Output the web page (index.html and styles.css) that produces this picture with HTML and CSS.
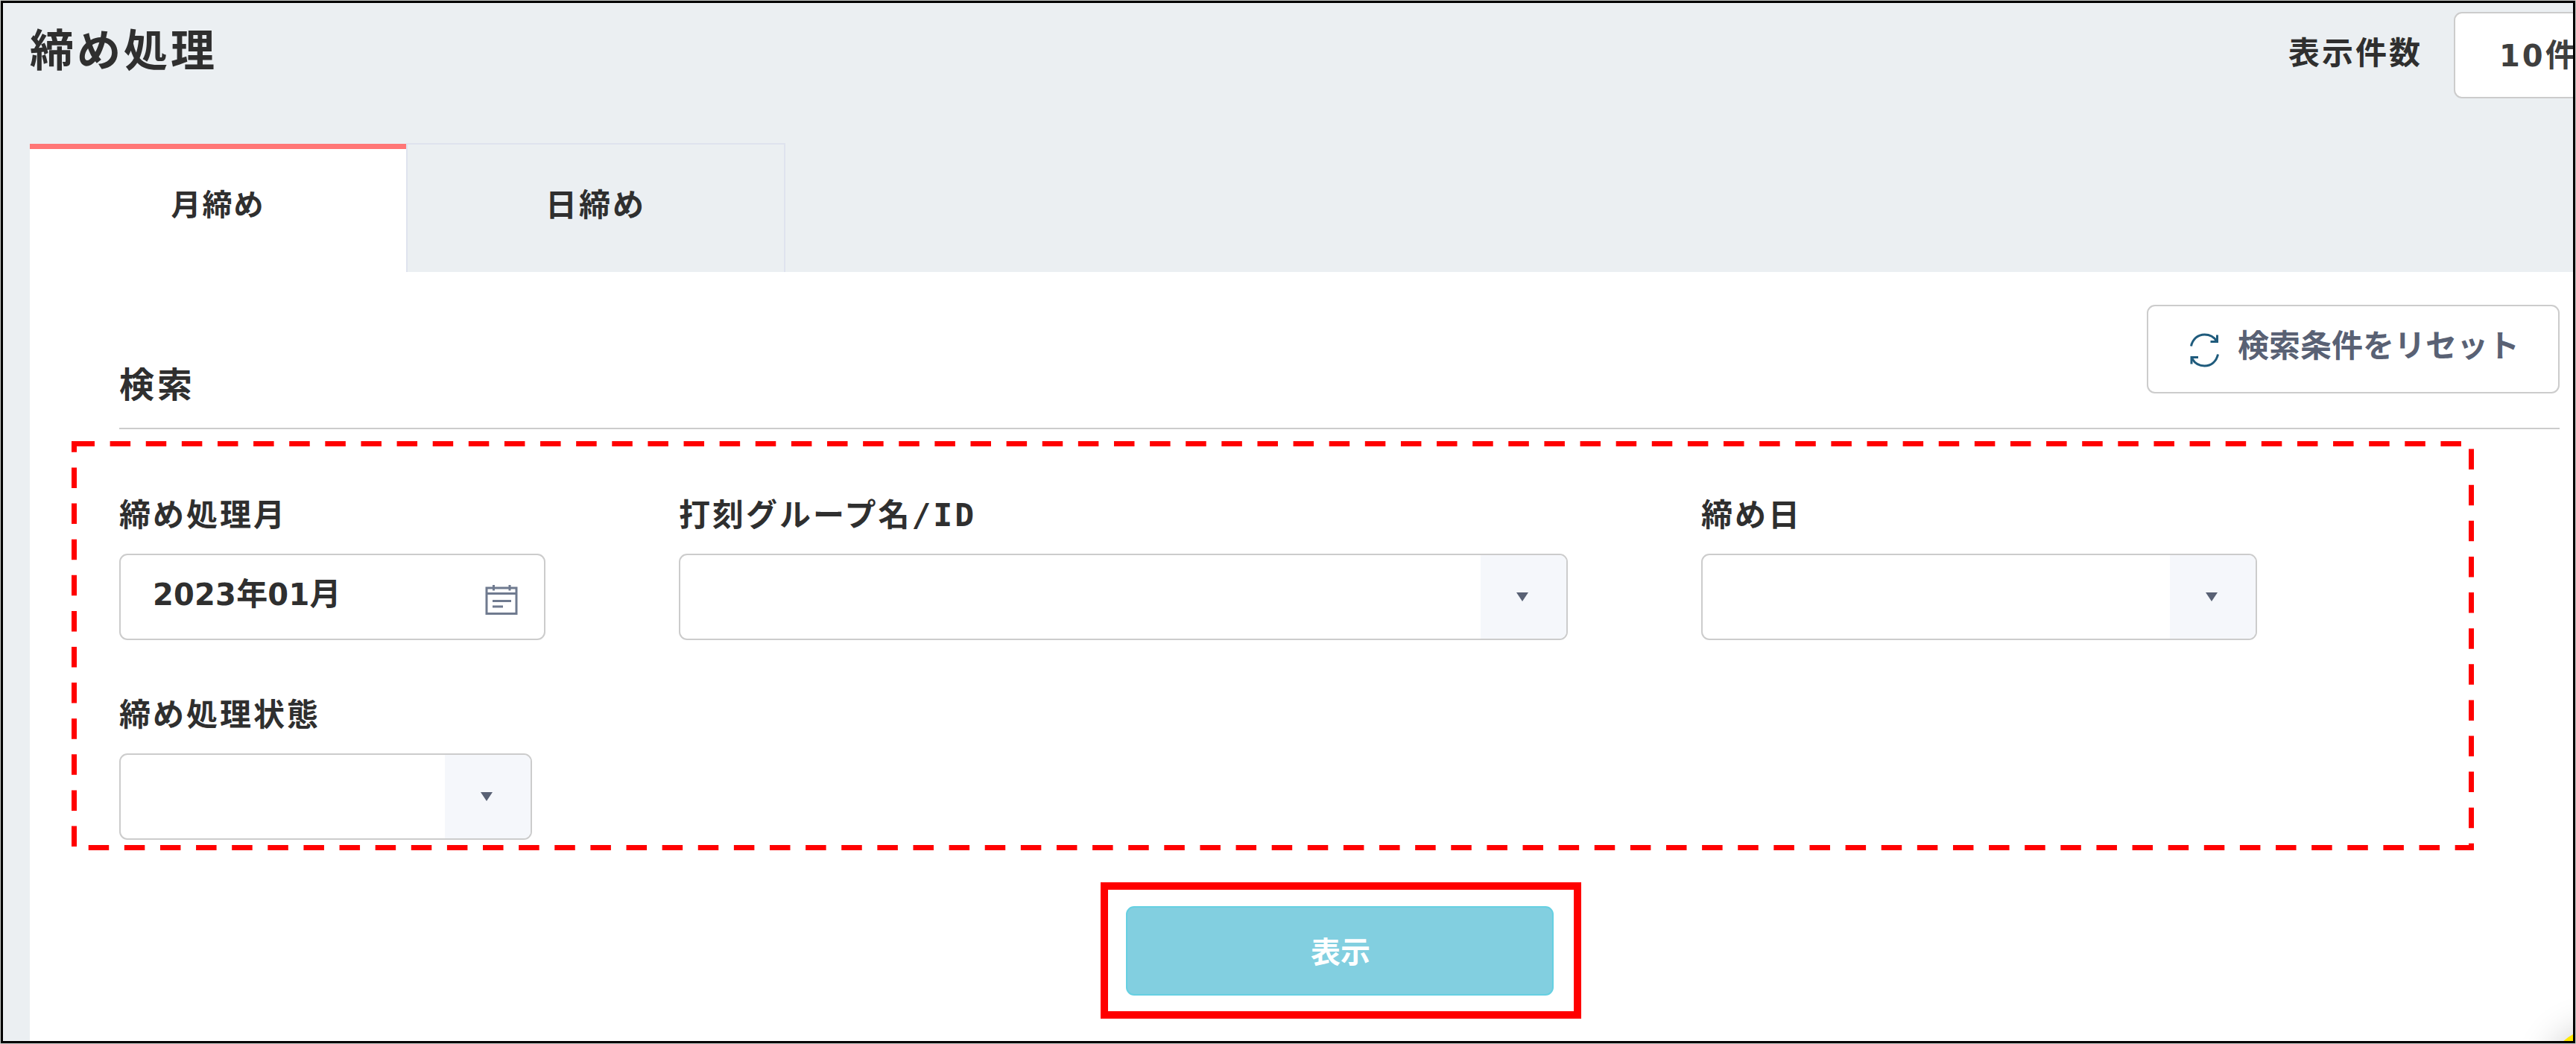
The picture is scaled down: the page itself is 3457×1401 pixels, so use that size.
FILE: index.html
```html
<!DOCTYPE html>
<html lang="ja">

<head>
    <meta charset="utf-8">
    <title>締め処理</title>
    <link rel="stylesheet" href="styles.css">
</head>

<body>
    <div class="page">
        <header class="page-header">
            <h1>締め処理</h1>
            <div class="page-size">
                <span class="page-size-label">表示件数</span>
                <div class="page-size-select"><span class="num">10</span>件</div>
            </div>
        </header>

        <nav class="tabs">
            <a class="tab active">月締め</a>
            <a class="tab">日締め</a>
        </nav>

        <main class="panel">
            <div class="search-header">
                <h2>検索</h2>
                <button class="reset" type="button">
                    <svg class="icon-reset" viewBox="0 0 42 48">
                        <path d="M2.5 18.5C4.5 9 11.5 3 20.500 3c7 0 13 3.500 16.500 9"/>
                        <path d="M37.500 3.500v9h-9"/>
                        <path d="M38.500 29.500C36.500 39 29.500 45 20.500 45c-7 0-13-3.500-16.500-9.500"/>
                        <path d="M3 42.500v-9h9"/>
                    </svg>
                    検索条件をリセット
                </button>
            </div>

            <div class="fields">
                <div class="field">
                    <label>締め処理月</label>
                    <div class="control month">
                        <span><span class="num">2023</span>年<span class="num">01</span>月</span>
                        <svg class="icon-calendar" viewBox="0 0 44 42">
                            <path d="M2 5h40v34.500H2zM2 12.500h40M11.500 1v7.500M33 1v7.500"/>
                            <path d="M10 22.500h25M10 30h14"/>
                        </svg>
                    </div>
                </div>
                <div class="field">
                    <label>打刻グループ名<span class="latin">/ID</span></label>
                    <div class="control group"><span class="arrow"></span></div>
                </div>
                <div class="field">
                    <label>締め日</label>
                    <div class="control day"><span class="arrow"></span></div>
                </div>
            </div>
            <div class="fields">
                <div class="field">
                    <label>締め処理状態</label>
                    <div class="control status"><span class="arrow"></span></div>
                </div>
            </div>

            <div class="actions">
                <div class="highlight">
                    <button class="submit" type="button">表示</button>
                </div>
            </div>
        </main>

        <svg class="dashed-frame" width="3224" height="549">
            <rect x="3.5" y="3.5" width="3217" height="542"/>
        </svg>
        <div class="bubble"></div>
    </div>
</body>

</html>
```

FILE: styles.css
```css
* {
    box-sizing: border-box;
}

body {
    margin: 0;
    padding: 1px;
    background-color: #c9ccc9;
    color: #2f2f2f;
    font: bold 42px/60px "Noto Sans CJK JP", sans-serif;
    letter-spacing: 3px;
}

h1,
h2 {
    margin: 0;
    line-height: 60px;
}

button {
    margin: 0;
    padding: 0;
    font: inherit;
    cursor: pointer;
}

.page {
    position: relative;
    height: 1399px;
    border: 3px solid #000;
    background-color: #ebeff2;
    overflow: hidden;
}

.page-header {
    display: flex;
    justify-content: space-between;
    height: 188px;
    padding-left: 36px;
}

.page-header h1 {
    padding-top: 30px;
    font-size: 59px;
    letter-spacing: 4px;
}

.page-size {
    display: flex;
    width: 382px;
    white-space: nowrap;
}

.page-size-label {
    margin-right: 42px;
    padding-top: 34px;
}

.page-size-select {
    flex: none;
    width: 320px;
    height: 116px;
    margin-top: 12px;
    padding: 23px 0 0 59px;
    border: 2px solid #ccc;
    border-radius: 11px;
    background-color: #fff;
    color: #3f3f3f;
}

.num {
    font-family: "DejaVu Sans", sans-serif;
    font-size: 40px;
    line-height: 1;
}

.latin {
    font-family: "DejaVu Sans Mono", monospace;
    font-size: 43px;
    line-height: 1;
}

.tabs {
    display: flex;
    height: 173px;
    padding-left: 36px;
}

.tab {
    width: 509px;
    padding-top: 48px;
    border: 2px solid #dfe3ee;
    border-bottom: 0;
    text-align: center;
}

.tab.active {
    width: 505px;
    margin-top: 1px;
    padding-top: 42px;
    border: 0;
    border-top: 7px solid #ff7676;
    background-color: #fff;
    font-size: 40px;
    letter-spacing: 2px;
}

.panel {
    height: 1032px;
    margin-left: 36px;
    padding: 0 18px 0 120px;
    background-color: #fff;
}

.search-header {
    display: flex;
    justify-content: space-between;
    height: 211px;
    border-bottom: 2px solid #ccc;
}

.search-header h2 {
    padding-top: 118px;
    font-size: 47px;
    letter-spacing: 4px;
}

.reset {
    display: flex;
    width: 554px;
    height: 119px;
    margin-top: 44px;
    padding: 20px 0 0 55px;
    border: 2px solid #ccc;
    border-radius: 11px;
    background-color: #fff;
    color: #596174;
    letter-spacing: 0;
}

.icon-reset {
    flex: none;
    width: 42px;
    height: 48px;
    margin: 15px 23px 0 0;
    fill: none;
    stroke: #1f5b7c;
    stroke-width: 3;
}

.fields {
    display: flex;
    gap: 179px;
    padding-top: 82px;
}

.fields + .fields {
    padding-top: 67px;
}

.field label {
    display: block;
    height: 60px;
    margin-bottom: 25px;
}

.control {
    display: flex;
    justify-content: flex-end;
    height: 116px;
    border: 2px solid #ccc;
    border-radius: 11px;
    background-color: #fff;
    overflow: hidden;
}

.month {
    justify-content: space-between;
    width: 572px;
    padding: 19px 35px 0 43px;
    letter-spacing: .2px;
}

.group {
    width: 1193px;
}

.day {
    width: 746px;
}

.status {
    width: 554px;
}

.icon-calendar {
    width: 44px;
    height: 42px;
    margin-top: 20px;
    fill: none;
    stroke: #6f7a8f;
    stroke-width: 3;
}

.arrow {
    width: 115px;
    background-color: #f5f7fb;
}

.arrow::before {
    content: "";
    display: block;
    width: 0;
    margin: 50px 0 0 48px;
    border: 8px solid transparent;
    border-top: 12px solid #596174;
    border-bottom: 0;
}

.actions {
    display: flex;
    justify-content: center;
    padding: 57px 0 0 4px;
}

.highlight {
    height: 183px;
    padding: 22px 27px 0 24px;
    border: 10px solid #f00;
}

.submit {
    width: 574px;
    height: 120px;
    padding: 0 0 3px 2px;
    border: 2px solid #66d0e2;
    border-radius: 11px;
    background-color: #82cfe0;
    color: #fff;
    font-size: 40px;
    letter-spacing: 0;
}

.dashed-frame {
    position: absolute;
    top: 588px;
    left: 92px;
    fill: none;
    stroke: #f00;
    stroke-width: 7;
    stroke-dasharray: 27.5 20.62;
    pointer-events: none;
}

/* chat bubble, mostly hidden behind the corner */
.bubble {
    position: absolute;
    right: -88px;
    bottom: -104px;
    width: 120px;
    height: 120px;
    border-radius: 50%;
    background-color: #ffe800;
    box-shadow: 0 0 50px rgba(0, 0, 0, .2);
}
```
